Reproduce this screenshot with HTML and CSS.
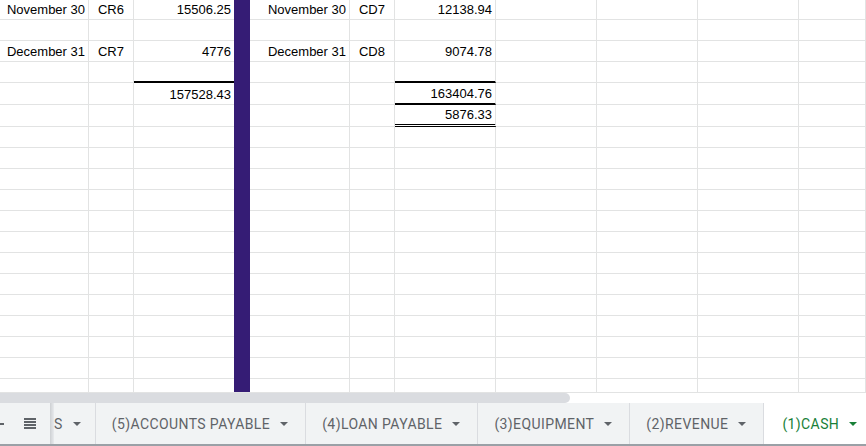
FILE: index.html
```html
<!DOCTYPE html>
<html lang="en">
<head>
  <meta charset="UTF-8" />
  <meta name="viewport" content="width=device-width, initial-scale=1.0" />
  <title>Cash ledger</title>
  <link rel="stylesheet" href="styles.css">
</head>
<body>
  <div class="sheet">
    <div class="row top">
      <div class="c">November 30</div><div class="c mid">CR6</div><div class="c edge">15506.25</div><div class="band"></div>
      <div class="c">November 30</div><div class="c mid">CD7</div><div class="c">12138.94</div>
      <div class="c"></div><div class="c"></div><div class="c"></div><div class="c"></div>
    </div>
    <div class="row">
      <div class="c"></div><div class="c"></div><div class="c edge"></div><div class="band"></div>
      <div class="c"></div><div class="c"></div><div class="c"></div>
      <div class="c"></div><div class="c"></div><div class="c"></div><div class="c"></div>
    </div>
    <div class="row">
      <div class="c">December 31</div><div class="c mid">CR7</div><div class="c edge">4776</div><div class="band"></div>
      <div class="c">December 31</div><div class="c mid">CD8</div><div class="c">9074.78</div>
      <div class="c"></div><div class="c"></div><div class="c"></div><div class="c"></div>
    </div>
    <div class="row">
      <div class="c"></div><div class="c"></div><div class="c edge rule"></div><div class="band"></div>
      <div class="c"></div><div class="c"></div><div class="c rule"></div>
      <div class="c"></div><div class="c"></div><div class="c"></div><div class="c"></div>
    </div>
    <div class="row tall">
      <div class="c"></div><div class="c"></div><div class="c edge">157528.43</div><div class="band"></div>
      <div class="c"></div><div class="c"></div><div class="c rule">163404.76</div>
      <div class="c"></div><div class="c"></div><div class="c"></div><div class="c"></div>
    </div>
    <div class="row tall">
      <div class="c"></div><div class="c"></div><div class="c edge"></div><div class="band"></div>
      <div class="c"></div><div class="c"></div><div class="c dbl">5876.33</div>
      <div class="c"></div><div class="c"></div><div class="c"></div><div class="c"></div>
    </div>
    <div class="row"><div class="c"></div><div class="c"></div><div class="c edge"></div><div class="band"></div><div class="c"></div><div class="c"></div><div class="c"></div><div class="c"></div><div class="c"></div><div class="c"></div><div class="c"></div></div>
    <div class="row"><div class="c"></div><div class="c"></div><div class="c edge"></div><div class="band"></div><div class="c"></div><div class="c"></div><div class="c"></div><div class="c"></div><div class="c"></div><div class="c"></div><div class="c"></div></div>
    <div class="row"><div class="c"></div><div class="c"></div><div class="c edge"></div><div class="band"></div><div class="c"></div><div class="c"></div><div class="c"></div><div class="c"></div><div class="c"></div><div class="c"></div><div class="c"></div></div>
    <div class="row"><div class="c"></div><div class="c"></div><div class="c edge"></div><div class="band"></div><div class="c"></div><div class="c"></div><div class="c"></div><div class="c"></div><div class="c"></div><div class="c"></div><div class="c"></div></div>
    <div class="row"><div class="c"></div><div class="c"></div><div class="c edge"></div><div class="band"></div><div class="c"></div><div class="c"></div><div class="c"></div><div class="c"></div><div class="c"></div><div class="c"></div><div class="c"></div></div>
    <div class="row"><div class="c"></div><div class="c"></div><div class="c edge"></div><div class="band"></div><div class="c"></div><div class="c"></div><div class="c"></div><div class="c"></div><div class="c"></div><div class="c"></div><div class="c"></div></div>
    <div class="row"><div class="c"></div><div class="c"></div><div class="c edge"></div><div class="band"></div><div class="c"></div><div class="c"></div><div class="c"></div><div class="c"></div><div class="c"></div><div class="c"></div><div class="c"></div></div>
    <div class="row"><div class="c"></div><div class="c"></div><div class="c edge"></div><div class="band"></div><div class="c"></div><div class="c"></div><div class="c"></div><div class="c"></div><div class="c"></div><div class="c"></div><div class="c"></div></div>
    <div class="row"><div class="c"></div><div class="c"></div><div class="c edge"></div><div class="band"></div><div class="c"></div><div class="c"></div><div class="c"></div><div class="c"></div><div class="c"></div><div class="c"></div><div class="c"></div></div>
    <div class="row"><div class="c"></div><div class="c"></div><div class="c edge"></div><div class="band"></div><div class="c"></div><div class="c"></div><div class="c"></div><div class="c"></div><div class="c"></div><div class="c"></div><div class="c"></div></div>
    <div class="row"><div class="c"></div><div class="c"></div><div class="c edge"></div><div class="band"></div><div class="c"></div><div class="c"></div><div class="c"></div><div class="c"></div><div class="c"></div><div class="c"></div><div class="c"></div></div>
    <div class="row"><div class="c"></div><div class="c"></div><div class="c edge"></div><div class="band"></div><div class="c"></div><div class="c"></div><div class="c"></div><div class="c"></div><div class="c"></div><div class="c"></div><div class="c"></div></div>
    <div class="row"><div class="c"></div><div class="c"></div><div class="c edge"></div><div class="band"></div><div class="c"></div><div class="c"></div><div class="c"></div><div class="c"></div><div class="c"></div><div class="c"></div><div class="c"></div></div>
  </div>

  <div class="hscroll"><div class="thumb"></div></div>

  <div class="tabs">
    <span class="dash"></span>
    <svg class="all-sheets" width="12" height="11" viewBox="0 0 12 11">
      <rect x="0" y="0" width="12" height="2" />
      <rect x="0" y="3" width="12" height="2" />
      <rect x="0" y="6" width="12" height="2" />
      <rect x="0" y="9" width="12" height="2" />
    </svg>
    <span class="fade"></span>
    <div class="tab cut">S <svg class="caret" width="8" height="4" viewBox="0 0 8 4"><polygon points="0,0 8,0 4,4" /></svg></div>
    <div class="tab">(5)ACCOUNTS PAYABLE <svg class="caret" width="8" height="4" viewBox="0 0 8 4"><polygon points="0,0 8,0 4,4" /></svg></div>
    <div class="tab">(4)LOAN PAYABLE <svg class="caret" width="8" height="4" viewBox="0 0 8 4"><polygon points="0,0 8,0 4,4" /></svg></div>
    <div class="tab">(3)EQUIPMENT <svg class="caret" width="8" height="4" viewBox="0 0 8 4"><polygon points="0,0 8,0 4,4" /></svg></div>
    <div class="tab">(2)REVENUE <svg class="caret" width="8" height="4" viewBox="0 0 8 4"><polygon points="0,0 8,0 4,4" /></svg></div>
    <div class="tab active">(1)CASH <svg class="caret" width="8" height="4" viewBox="0 0 8 4"><polygon points="0,0 8,0 4,4" /></svg></div>
  </div>
</body>
</html>
```

FILE: styles.css
```css
* {
  box-sizing: border-box;
}

body {
  margin: 0;
  width: 866px;
  height: 446px;
  overflow: hidden;
  background: #fff;
  font-family: "Liberation Sans", Arial, sans-serif;
  color: #000;
}

/* grid */
.sheet {
  height: 392px;
  overflow: hidden;
}

.row {
  display: grid;
  grid-template-columns: 89px 45px 100px 16px 100px 45px 101px 101px 101px 101px 1fr;
  height: 21px;
}

.row.top {
  height: 20px;
}

.row.tall {
  height: 22px;
}

.c {
  display: flex;
  align-items: flex-end;
  justify-content: flex-end;
  padding: 0 3px 2px;
  border-right: 1px solid #e2e3e3;
  border-bottom: 1px solid #e2e3e3;
  font-size: 13px;
  line-height: 15px;
  white-space: nowrap;
  overflow: hidden;
}

.c.mid {
  justify-content: center;
}

.c.edge {
  border-right: none;
}

.c.rule {
  border-bottom: 2px solid #000;
}

.c.dbl {
  border-bottom: 3px double #000;
}

.band {
  background: #351c75;
}

/* horizontal scrollbar */
.hscroll {
  height: 11px;
  border-top: 1px solid #e2e3e3;
}

.thumb {
  width: 570px;
  height: 100%;
  background: #dadce0;
  border-radius: 0 5px 5px 0;
}

/* sheet tabs */
.tabs {
  display: flex;
  align-items: stretch;
  height: 43px;
  overflow: hidden;
  background: #f1f3f4;
  border-bottom: 2px solid #9aa0a6;
  font-family: Roboto, "Open Sans", sans-serif;
  font-size: 14px;
  letter-spacing: 0.4px;
  color: #5f6368;
}

.tabs > * {
  flex-shrink: 0;
}

.dash {
  width: 4px;
  height: 2px;
  align-self: center;
  background: #5f6368;
}

.all-sheets {
  align-self: center;
  margin-left: 20px;
  fill: #5f6368;
}

.fade {
  width: 4px;
  margin-left: 14px;
  background: linear-gradient(to right, #cdd0d3, #e8eaed);
}

.tab {
  display: flex;
  align-items: center;
  gap: 10px;
  padding: 0 17px 0 16px;
  border-right: 1px solid #dadce0;
  white-space: nowrap;
}

.tab.cut {
  padding-left: 0;
  padding-right: 14px;
}

.tab.active {
  flex-grow: 1;
  padding-left: 18px;
  background: #fff;
  color: #188038;
  border-right: none;
}

.caret {
  fill: currentColor;
}
```
